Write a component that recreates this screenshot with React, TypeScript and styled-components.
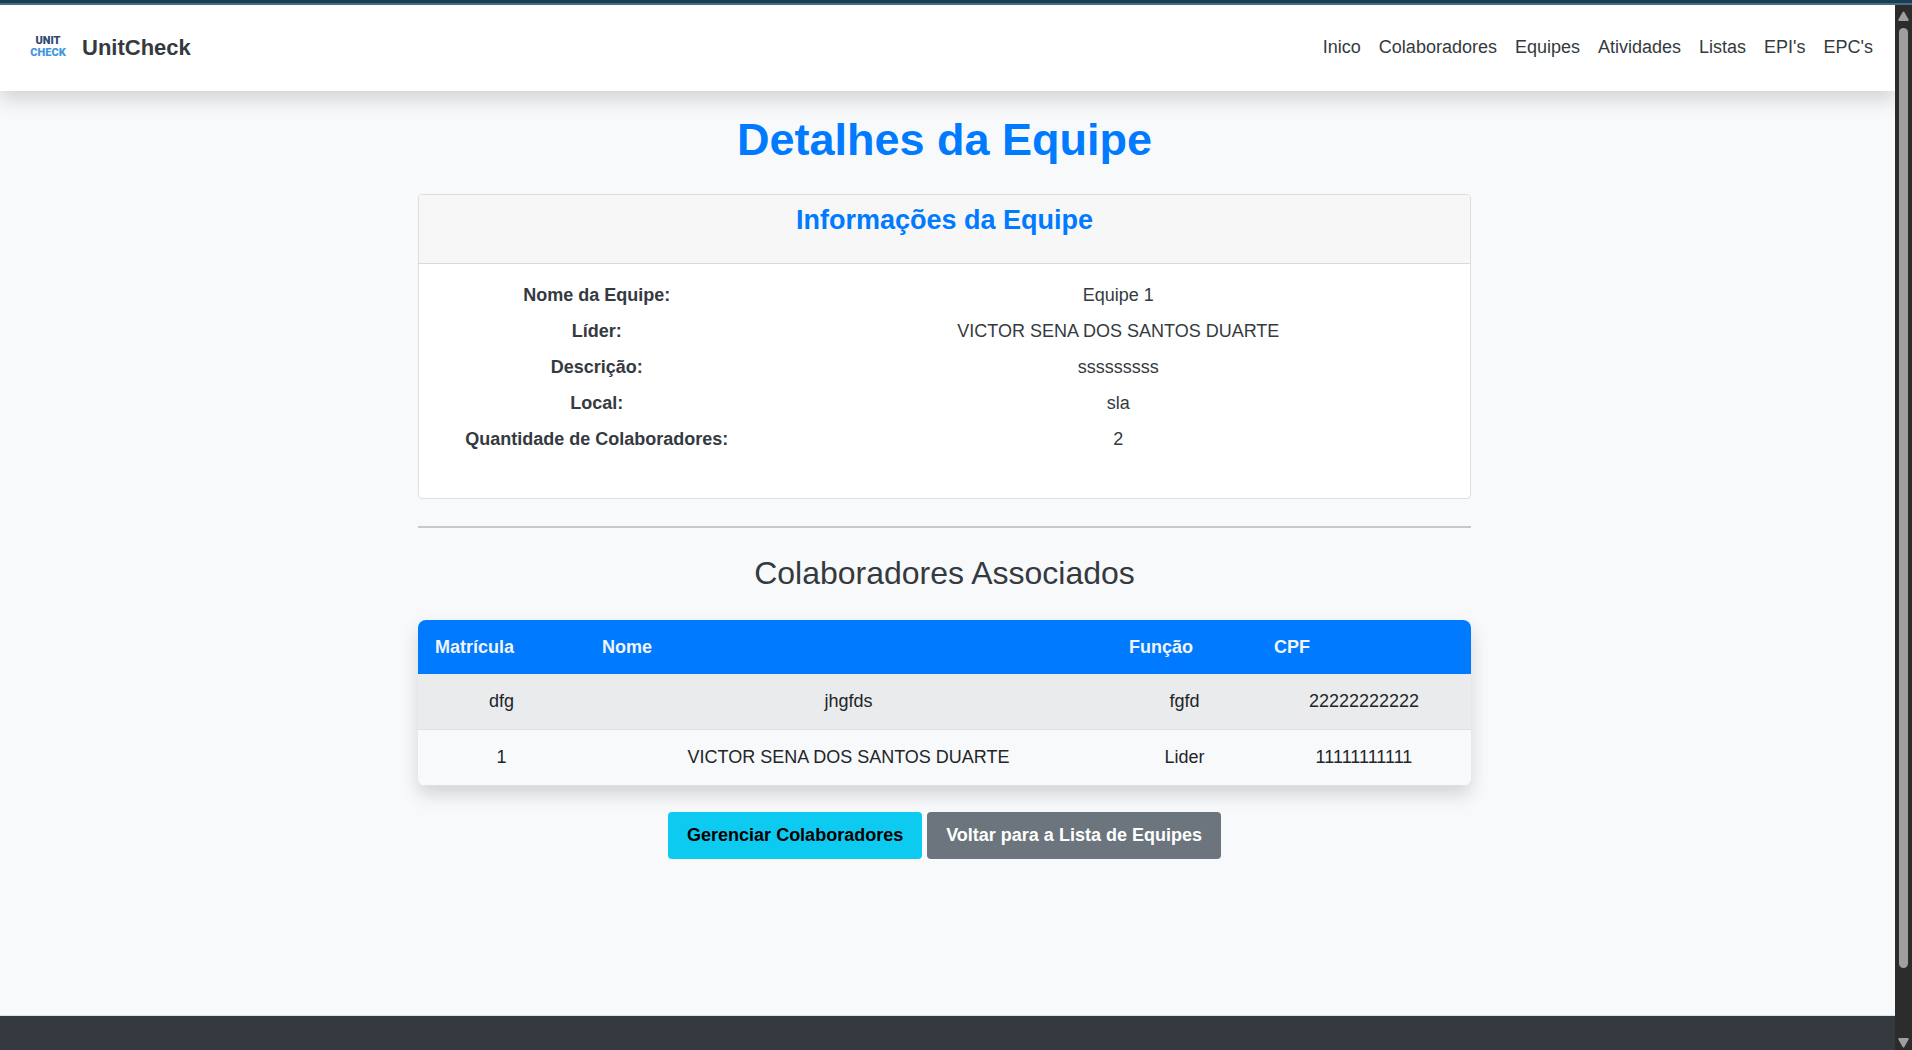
import React from "react";
import styled, { createGlobalStyle } from "styled-components";

const GlobalStyle = createGlobalStyle`
  *, *::before, *::after { box-sizing: border-box; }
  body {
    margin: 0;
    background: #f8f9fb;
    color: #343a40;
    font-family: "Liberation Sans", Arial, sans-serif;
    font-size: 18px;
    line-height: 27px;
  }
`;

const Shell = styled.div`
  min-height: 100vh;
  display: flex;
  flex-direction: column;
`;

const TopStrip = styled.div`
  height: 5px;
  background: #183f56;
  border-bottom: 2px solid #4a6b80;
`;

const Viewport = styled.div`
  flex: 1;
  display: flex;
`;

const Page = styled.div`
  flex: 1;
  min-width: 0;
  display: flex;
  flex-direction: column;
  overflow: hidden;
`;

const Header = styled.header`
  display: flex;
  align-items: center;
  justify-content: space-between;
  height: 86px;
  padding: 0 22px 2px 30px;
  background: #fff;
  box-shadow: 0 9px 18px rgba(0, 0, 0, 0.15);
`;

const Brand = styled.a`
  display: flex;
  align-items: center;
  gap: 16px;
  color: inherit;
  font-size: 22px;
  font-weight: 700;
  text-decoration: none;
`;

const Logo = styled.span`
  display: flex;
  flex-direction: column;
  align-items: center;
  width: 36px;
  color: #3f97e0;
  font-family: Roboto, "Liberation Sans", sans-serif;
  font-size: 11px;
  font-weight: 900;
  line-height: 12px;
`;

const LogoTop = styled.span`
  color: #2b4a70;
`;

const Nav = styled.nav`
  display: flex;
  gap: 18px;
`;

const NavLink = styled.a`
  color: inherit;
  text-decoration: none;
`;

const Main = styled.main`
  flex: 1;
  width: 100%;
  max-width: 1059px;
  margin: 0 auto;
  padding: 22px 6px 0 0;
  text-align: center;
`;

const Title = styled.h1`
  margin: 0 0 27px;
  color: #007bff;
  font-size: 45px;
  line-height: 54px;
`;

const Card = styled.section`
  border: 1px solid #dcdee0;
  border-radius: 4px;
  background: #fff;
  overflow: hidden;
`;

const CardTitle = styled.h2`
  margin: 0;
  padding: 8px 18px 26px;
  border-bottom: 1px solid #d8d9da;
  background: #f7f7f7;
  color: #007bff;
  font-size: 27px;
  line-height: 34px;
`;

const Details = styled.dl`
  display: grid;
  grid-template-columns: 1fr 2fr;
  row-gap: 9px;
  margin: 0;
  padding: 18px 4px 45px;
`;

const Term = styled.dt`
  font-weight: 700;
`;

const Value = styled.dd`
  margin: 0;
`;

const Divider = styled.hr`
  height: 2px;
  margin: 27px 0 26px;
  border: 0;
  background: #c6c8ca;
`;

const Subtitle = styled.h2`
  margin: 0 0 28px;
  font-size: 32px;
  font-weight: 400;
  line-height: 38px;
`;

const Table = styled.table`
  width: 100%;
  table-layout: fixed;
  border-collapse: separate;
  border-spacing: 0;
  border-radius: 8px;
  overflow: hidden;
  color: #212529;
  box-shadow: 0 9px 18px rgba(0, 0, 0, 0.15);
`;

const HeadCell = styled.th<{ $width?: string }>`
  width: ${(p) => p.$width ?? "auto"};
  padding: 14px 17px 13px;
  background: #007bff;
  color: #f1f3f6;
  text-align: left;
`;

const Row = styled.tr`
  background: #f8f9fb;
  &:nth-child(odd) { background: #eaebed; }
`;

const Cell = styled.td`
  padding: 14px 17px;
  border-bottom: 1px solid #dee2e6;
`;

const Actions = styled.div`
  display: flex;
  justify-content: center;
  gap: 5px;
  margin-top: 26px;
`;

const Button = styled.button<{ $tone: "info" | "secondary" }>`
  padding: 10px 19px;
  border: 0;
  border-radius: 4px;
  background: ${(p) => (p.$tone === "info" ? "#0dcaf0" : "#6c757d")};
  color: ${(p) => (p.$tone === "info" ? "#000" : "#fff")};
  font: inherit;
  font-weight: 700;
  cursor: pointer;
`;

const Footer = styled.footer`
  height: 35px;
  border-top: 1px solid #dee2e6;
  background: #343a40;
`;

const ScrollTrack = styled.div`
  display: flex;
  flex-direction: column;
  align-items: center;
  width: 17px;
  padding: 6px 0 2px;
  background: #2c2c2c;
`;

const ScrollThumb = styled.div`
  flex: 1;
  width: 9px;
  margin: 7px 0 70px;
  border-radius: 5px;
  background: #9f9f9f;
`;

const Arrow = ({ down = false }: { down?: boolean }) => (
  <svg width="11" height="10" viewBox="0 0 11 10" aria-hidden="true">
    <path
      d={down ? "M1 0h9q1 .5.6 1.500L6.300 9q-.8 1-1.600 0L.4 1.500Q0 .5 1 0z" : "M1 10h9q1-.5.6-1.500L6.300 1q-.8-1-1.600 0L.4 8.500Q0 9.500 1 10z"}
      fill="#9f9f9f"
    />
  </svg>
);

const links = ["Inico", "Colaboradores", "Equipes", "Atividades", "Listas", "EPI's", "EPC's"];

const details = [
  ["Nome da Equipe:", "Equipe 1"],
  ["Líder:", "VICTOR SENA DOS SANTOS DUARTE"],
  ["Descrição:", "sssssssss"],
  ["Local:", "sla"],
  ["Quantidade de Colaboradores:", "2"],
];

const members = [
  ["dfg", "jhgfds", "fgfd", "22222222222"],
  ["1", "VICTOR SENA DOS SANTOS DUARTE", "Lider", "11111111111"],
];

export default function App() {
  return (
    <Shell>
      <GlobalStyle />
      <TopStrip />
      <Viewport>
        <Page>
          <Header>
            <Brand href="#">
              <Logo>
                <LogoTop>UNIT</LogoTop>
                <span>CHECK</span>
              </Logo>
              UnitCheck
            </Brand>
            <Nav>
              {links.map((label) => (
                <NavLink key={label} href="#">{label}</NavLink>
              ))}
            </Nav>
          </Header>
          <Main>
            <Title>Detalhes da Equipe</Title>
            <Card>
              <CardTitle>Informações da Equipe</CardTitle>
              <Details>
                {details.map(([term, value]) => (
                  <React.Fragment key={term}>
                    <Term>{term}</Term>
                    <Value>{value}</Value>
                  </React.Fragment>
                ))}
              </Details>
            </Card>
            <Divider />
            <Subtitle>Colaboradores Associados</Subtitle>
            <Table>
              <thead>
                <tr>
                  <HeadCell $width="167px">Matrícula</HeadCell>
                  <HeadCell>Nome</HeadCell>
                  <HeadCell $width="145px">Função</HeadCell>
                  <HeadCell $width="214px">CPF</HeadCell>
                </tr>
              </thead>
              <tbody>
                {members.map((member) => (
                  <Row key={member[0]}>
                    {member.map((text) => (
                      <Cell key={text}>{text}</Cell>
                    ))}
                  </Row>
                ))}
              </tbody>
            </Table>
            <Actions>
              <Button type="button" $tone="info">Gerenciar Colaboradores</Button>
              <Button type="button" $tone="secondary">Voltar para a Lista de Equipes</Button>
            </Actions>
          </Main>
          <Footer />
        </Page>
        <ScrollTrack>
          <Arrow />
          <ScrollThumb />
          <Arrow down />
        </ScrollTrack>
      </Viewport>
    </Shell>
  );
}
